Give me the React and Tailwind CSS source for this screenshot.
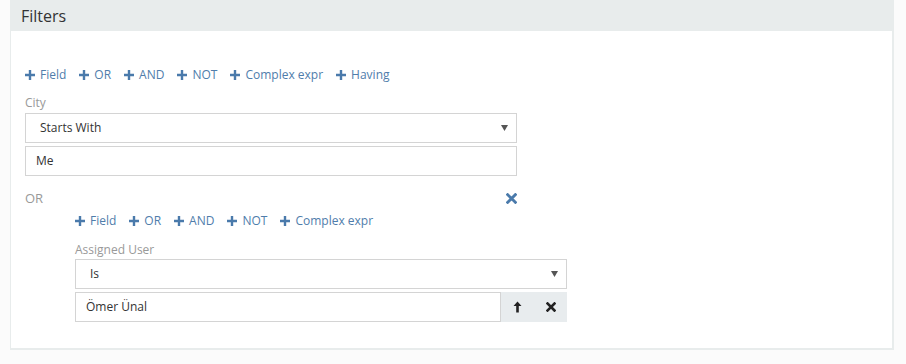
const font = { fontFamily: '"Open Sans", "Liberation Sans", sans-serif' };

function Plus() {
  return (
    <svg width="10" height="10" viewBox="0 0 10 10" className="shrink-0">
      <path d="M3.8 0h2.4v3.8H10v2.4H6.2V10H3.8V6.2H0V3.8h3.8z" fill="#4a7aab" />
    </svg>
  );
}

function Times({ color = "#4a7aab", size = 11 }) {
  return (
    <svg width={size} height={size} viewBox="0 0 10 10">
      <path d="M1.5 1.5L8.5 8.5M8.5 1.5L1.5 8.5" stroke={color} strokeWidth="2.6" strokeLinecap="square" />
    </svg>
  );
}

function ArrowUp() {
  return (
    <svg width="9" height="12" viewBox="0 0 9 12">
      <path d="M4.5 0.5L8.5 5H5.8V11.5H3.2V5H0.5z" fill="#222" />
    </svg>
  );
}

function AddLinks({ items }) {
  return (
    <div className="flex items-center gap-[13px] h-[18px] text-[12px] text-[#4f7dab]">
      {items.map((t) => (
        <span key={t} className="flex items-center gap-[5px]">
          <Plus />
          <span>{t}</span>
        </span>
      ))}
    </div>
  );
}

function SelectBox({ value }) {
  return (
    <div className="w-[492px] h-[30px] border border-[#d4d4d4] bg-white flex items-center justify-between pl-[14px] pr-[8px] text-[12px] text-[#333]">
      <span>{value}</span>
      <svg width="7" height="6" viewBox="0 0 7 6">
        <path d="M0 0h7L3.5 6z" fill="#555" />
      </svg>
    </div>
  );
}

export default function App() {
  return (
    <div className="w-[906px] h-[364px] bg-[#fbfbfb] pl-[10px]" style={font}>
      <div className="w-[884px] bg-[#e8ecec] border-l border-r-2 border-b-2 border-[#e8ecec]">
        <div className="h-[31px] flex items-center pl-[10px] text-[16px] text-[#333]">Filters</div>
        <div className="bg-white h-[317px] pl-[14px] pt-[35px]">
          <AddLinks items={["Field", "OR", "AND", "NOT", "Complex expr", "Having"]} />
          <div className="mt-[10px] h-[19px] text-[12px] text-[#999] leading-[18px]">City</div>
          <SelectBox value="Starts With" />
          <div className="mt-[3px] w-[492px] h-[30px] border border-[#d4d4d4] flex items-center pl-[10px] text-[12px] text-[#333]">
            Me
          </div>
          <div className="mt-[14px] w-[492px] h-[18px] flex items-center justify-between text-[13px] text-[#999]">
            <span>OR</span>
            <span className="-mt-[2px]"><Times /></span>
          </div>
          <div className="pl-[50px] mt-[4px]">
            <AddLinks items={["Field", "OR", "AND", "NOT", "Complex expr"]} />
            <div className="mt-[11px] h-[18px] text-[12px] text-[#999] leading-[18px]">Assigned User</div>
            <SelectBox value="Is" />
            <div className="mt-[3px] w-[492px] h-[30px] flex text-[12px] text-[#333]">
              <div className="flex-1 border border-[#d4d4d4] flex items-center pl-[10px]">Ömer Ünal</div>
              <div className="w-[66px] bg-[#e8ecee] flex items-center">
                <span className="w-[33px] flex justify-center"><ArrowUp /></span>
                <span className="w-[33px] flex justify-center"><Times color="#222" size={10} /></span>
              </div>
            </div>
          </div>
        </div>
      </div>
    </div>
  );
}
